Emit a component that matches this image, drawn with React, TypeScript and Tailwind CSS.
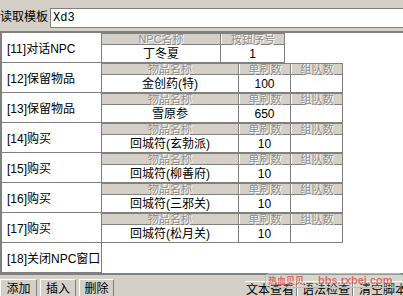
import React from 'react';

const F = "font-['Liberation_Sans','Noto_Sans_CJK_SC',sans-serif]";

type Row = { label: string; kind: 'npc' | 'item' | 'none'; name?: string; num?: string };

const rows: Row[] = [
  { label: '[11]对话NPC', kind: 'npc', name: '丁冬夏', num: '1' },
  { label: '[12]保留物品', kind: 'item', name: '金创药(特)', num: '100' },
  { label: '[13]保留物品', kind: 'item', name: '雪原参', num: '650' },
  { label: '[14]购买', kind: 'item', name: '回城符(玄勃派)', num: '10' },
  { label: '[15]购买', kind: 'item', name: '回城符(柳善府)', num: '10' },
  { label: '[16]购买', kind: 'item', name: '回城符(三邪关)', num: '10' },
  { label: '[17]购买', kind: 'item', name: '回城符(松月关)', num: '10' },
  { label: '[18]关闭NPC窗口', kind: 'none' },
];

function HeadCell({ w, text, first }: { w: string; text: string; first?: boolean }) {
  return (
    <div
      className={`${w} h-full shrink-0 bg-[#d4d0c8] border-r border-[#808080] ${first ? '' : 'border-l border-l-white'} flex items-center justify-center text-[11px] leading-[10px] text-[#8e8e8e] [text-shadow:1px_1px_0_#ffffff] whitespace-nowrap`}
    >
      {text}
    </div>
  );
}

function DataCell({ w, text }: { w: string; text?: string }) {
  return (
    <div className={`${w} h-full shrink-0 border-r border-[#808080] bg-white flex items-center justify-center text-[12px] leading-[12px] whitespace-nowrap`}>
      {text}
    </div>
  );
}

function SubTable({ row }: { row: Row }) {
  if (row.kind === 'npc') {
    return (
      <div className="flex flex-col w-[183px]">
        <div className="flex h-[12px] border-t border-b border-[#808080]">
          <HeadCell w="w-[119px]" text="NPC名称" first />
          <HeadCell w="w-[64px]" text="按钮序号" />
        </div>
        <div className="flex h-[18px] border-b border-[#808080]">
          <DataCell w="w-[119px]" text={row.name} />
          <DataCell w="w-[64px]" text={row.num} />
        </div>
      </div>
    );
  }
  return (
    <div className="flex flex-col w-[241px]">
      <div className="flex h-[12px] border-t border-b border-[#808080]">
        <HeadCell w="w-[137px]" text="物品名称" first />
        <HeadCell w="w-[52px]" text="单刷数" />
        <HeadCell w="w-[52px]" text="组队数" />
      </div>
      <div className="flex h-[18px] border-b border-[#808080]">
        <DataCell w="w-[137px]" text={row.name} />
        <DataCell w="w-[52px]" text={row.num} />
        <DataCell w="w-[52px]" />
      </div>
    </div>
  );
}

function Btn({ text, w }: { text: string; w: string }) {
  return (
    <div className={`${w} h-[17px] shrink-0 bg-[#d4d0c8] border-t border-l border-white border-r border-r-[#808080] flex justify-center pt-[3px] text-[12px] leading-[12px] whitespace-nowrap`}>
      {text}
    </div>
  );
}

export default function App() {
  return (
    <div className={`relative w-[403px] h-[296px] overflow-hidden bg-[#d4d0c8] text-black ${F}`}>
      <div className="flex h-[31px]">
        <div className="w-[50px] shrink-0 pt-[11px] text-[12px] leading-[12px] whitespace-nowrap">读取模板</div>
        <div className="flex-1 mt-[8px] h-[20px] bg-white border border-r-0 border-[#808080] pl-[2px] pt-[3px] text-[12px] leading-[12px] font-['Liberation_Mono',monospace]">
          Xd3
        </div>
      </div>
      <div className="h-[244px] border-t-2 border-l-2 border-b-2 border-[#808080] bg-white">
        {rows.map((r) => (
          <div key={r.label} className="flex h-[30px]">
            <div className="w-[100px] shrink-0 border-r border-b border-[#808080] bg-white flex items-center pl-[5px] pt-[2px] text-[12px] leading-[12px] whitespace-nowrap">
              {r.label}
            </div>
            {r.kind !== 'none' && <SubTable row={r} />}
          </div>
        ))}
      </div>
      <div className="flex h-[21px] overflow-hidden">
        <div className="flex gap-[3px] pt-[4px]">
          <Btn text="添加" w="w-[37px]" />
          <Btn text="插入" w="w-[36px]" />
          <Btn text="删除" w="w-[35px]" />
        </div>
        <div className="flex ml-[131px] pt-[6px]">
          <div className="w-[52px] h-[15px] shrink-0 border-t border-white border-r border-r-[#808080] pl-[1px] pt-[2px] text-[12px] leading-[12px] whitespace-nowrap">文本查看</div>
          <div className="w-[56px] h-[15px] shrink-0 border-t border-l border-white border-r border-r-[#808080] pl-[4px] pt-[2px] text-[12px] leading-[12px] whitespace-nowrap">语法检查</div>
          <div className="w-[50px] h-[15px] shrink-0 border-t border-l border-white pl-[5px] pt-[2px] text-[12px] leading-[12px] whitespace-nowrap">清空脚本</div>
        </div>
      </div>
      <div className="absolute left-[265px] top-[273px] w-[138px] h-[15px] rounded-[5px] border border-r-0 border-[#8fcfc4] bg-[#e8f4f0]/20 flex items-center pl-[2px] gap-[14px] text-[#e0463c]/75 font-bold">
        <span className="text-[9px] leading-[10px] whitespace-nowrap">热血贝贝</span>
        <span className="text-[11px] leading-[11px] whitespace-nowrap">bbs.rxbei.com</span>
      </div>
    </div>
  );
}
